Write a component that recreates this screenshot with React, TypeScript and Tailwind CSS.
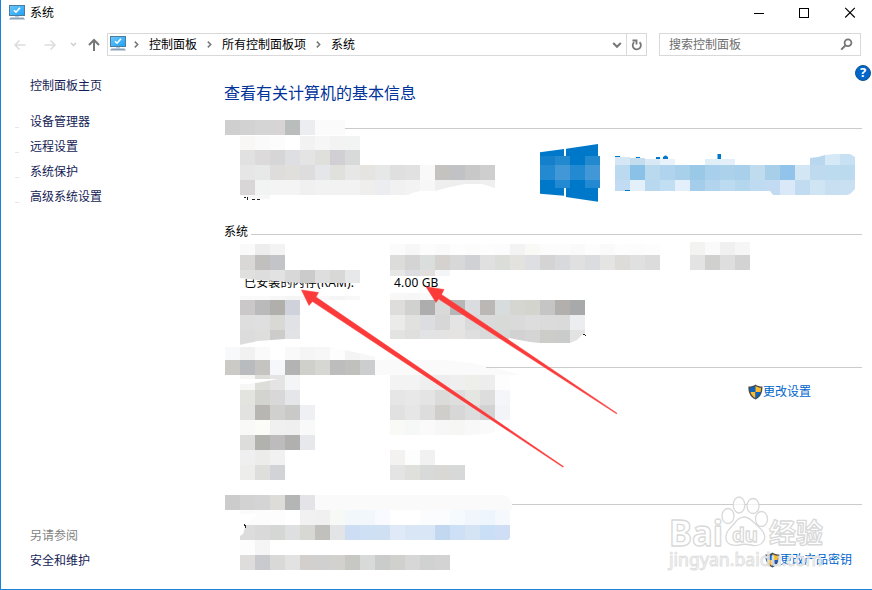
import React from "react";

type TileRow = [x: number, y: number, height: number, colors: string];

// Each colour is one 15px wide tile
const systemTiles: TileRow[] = [
  [225, 120, 15, "cfcfcf d2d2d2 d5d5d5 d7d4d6 b9bdbb ecedf1 fbfbfb fbfbfb"],
  [240, 136, 14, "f8f7f5 fafafa fcfcfc ffffff f2f2f2 f6f6f6 f3f3f3 f2f4f4"],
  [240, 150, 15, "e1e1e1 dcdadb d6d6d6 dddfe2 e4e4e4 dfdfdc d1cfd3 d8dad9"],
  [240, 165, 15, "e6e6e6 e6e9e7 dfdddb e1dfdb dddddd e4e6e9 e0e0dd e7e7e7 e6e4e1 e5e8e6 dfdfe0 e1e1e1 f9f9f9 c5c3c0 c0c2c5 c8c8c8 cecece"],
  [240, 180, 15, "d9d6d8 f2f4f3 f4f4f4 f4f4f4 f0f0f0 f2f2f2 f2f2f2 f2f2f2 f0eeec ecedf0 f1f1f1 f3f3f3 f7f7f7 efefef eeeeee eeeeee efefef"],
  [240, 244, 11, "fafafa ededed f3f3f3"],
  [240, 255, 15, "d9d8d6 c2c0be c2c4c7"],
  [240, 296, 4, "fafafa fafafa f7f7f7 f5f5f5 f7f7f7 f8f8f8 f5f5f5 f8f8f8"],
  [240, 300, 15, "cac8c8 bababb b0afac cfd2da"],
  [240, 315, 15, "dedede dfdfdf d8d8d5 e1e2e5"],
  [240, 330, 15, "dcdcdc dededc cdcccb e2e3e4"],
  [390, 244, 11, "fbfbfb f7f7f7 fcfcfc fafafa fdfdfd fcfcfc fdfdfd fcfcfc f3f3f3 f9f9f6 fcfcfc fcfcfc fafafa fdfdfd fafafa fdfdfd fcfcfc fdfdfd"],
  [390, 255, 15, "dcdcda d4d4d4 dadedc d4d1ce d8d8d8 d0d1d4 e0e0e0 dbddd9 e4e2df dedfe2 d4d4d4 d8d9dc e0e0e0 dbdce0 e4e4e2 dedcd9 e0e0e0 dcdcdc"],
  [390, 270, 6, "e7e7e5 dcdde1 e2dfde f4f5f7"],
  [390, 293, 7, "f8f8f8 f7f7f7 f9f9f9 fbfbfb"],
  [390, 300, 15, "dedddb d1d1cf adadad d9d9d9 b6b6b7 dadcdf bab7b4 d7dddc d5d5d2 d4d4cf c5c5c5 b2afac a8a9ab"],
  [390, 315, 15, "ebebe9 e1e1df dcdde1 d7d7d7 e4e4e4 dadada dadada d8dad7 dadada dddddd dbdbdb dadada ecedf0"],
  [390, 330, 9, "e3e3e1 dfdfdd e2e3e5 e3e3e3 e6e4e2 dfdfdf dadada d7d9d8"],
  [510, 330, 13, "d2d2d2 d5d5d5 ccccc8 c9ccca e3e3e3"],
  [690, 242, 13, "f3f3f1 fafafa f0f0f0 f6f6f6"],
  [690, 255, 15, "e3e3e3 d0d0ce dedede d3d3d3"],
  [225, 347, 13, "f8f9fa f1f1f1 fafafa ffffff f9f9f9 f5f5f5 f7f7f7 fdfdfd f4f4f4 f7f7f7"],
  [225, 360, 15, "cbcac6 b9bcbe c5c4c1 f5f7fa b3b3b3 cfcfcc d6d6d3 bdbdbd c0c0bd cccdce"],
  [240, 375, 15, "f7f7f5 ddddda e4e4e4 f4f5f7"],
  [240, 390, 15, "e3e3e0 d3d3d0 d8d8d8 e4e6ea"],
  [240, 405, 15, "e2e2e0 b7b6b3 d0d0cf c9c9c8 eef0f3"],
  [240, 420, 15, "f9f9f7 fbfbf8 f0f0f0 efefef f9f9f9"],
  [240, 435, 15, "dddddb b1b1ad bebbbc b0b0ae e7e8eb"],
  [240, 450, 15, "efefef ececea f1f1f1"],
  [240, 465, 15, "ededeb dededc d2d3d6"],
  [390, 375, 15, "f3f3f3 f3f3f3 efefef ededed efefef eeeeeb ededed fcfdfc"],
  [390, 390, 15, "e6e6e6 e8e8e8 e4e4e4 dbdbd9 dedede e5e5e2 dddddd f5f6f9"],
  [390, 405, 15, "e1e1e1 e6e6e6 dddddd d0cecb d7d7d7 dddddd d2d2d2 f3f4f7"],
  [390, 420, 15, "f9f9f6 f6f8f7 fafafa f7f7f7 f6f6f4 f8f8f8 fafafa"],
  [390, 450, 15, "f3f2f0 fcfdfc f1f1f1"],
  [390, 465, 15, "e4e4e4 dfdfdc d8dad9 dad8d5 d7d9d8"],
  [225, 495, 15, "cccccc d2d2d2 d4d4d4 dddcd9 b3b6b4 e3e3e8"],
  [240, 510, 15, "fbfbfb fbfcfb fdfdfd ffffff f1f1f1 f0f0f0 f7f9f7 f2f7fc f2f7fc f9faff ffffff ffffff fbfcfe fbfcfe f5fafe f1f6fc eef5fd f5f8fd"],
  [240, 525, 15, "dcdcdc d9d9d9 d5d7d4 dedfe1 d7d7d4 c1c0bd e3e4e5 cdddf4 cee0f4 cfe0f2 dfe9f8 d9e6f6 d9e6f6 c1d8f0 cee0f5 d5e4f4 c9dff5 cfdef5"],
  [240, 540, 15, "fdfdfd f5f5f5"],
  [240, 555, 15, "dfdddb c9cacd d9d9d7 e2e2e2 d2cfcc d0d0d0 d3d1ce c7c7c4 d8dad9 c9ccca d0d0cd d7d7d7 d0d2d1 d3d3d3"],
];

const ramTiles: TileRow[] = [
  [240, 270, 13, "e0e0df dddddd e2e2e2 d8d8d8 cbcbcb dedede d8d9d7 e7e8ea"],
];

const brandTiles: TileRow[] = [
  [540, 156, 9, "1480cb 2389cf 0078ca 2389cf"],
  [540, 165, 15, "2389d0 4298d6 2389d0 4298d6"],
  [540, 180, 8, "0078ca 2389d0 0078ca 2389d0"],
  [615, 157, 8, "d5e7f4"],
  [630, 158, 7, "c3ddef"],
  [645, 159, 6, "d8e9f5 e8f2fa"],
  [705, 159, 6, "e0eef8 e3f0f9"],
  [615, 165, 15, "bbdaf0 8ac1e6 b9d9ee b1d4ee a8d0ea 9ac8e7 a8cfec abd1eb a9d0eb bfdcef a8cfea 92c3ea d2e6f4"],
  [615, 180, 11, "c1dcf2 e3f0f9 b8d8ef c2def2 e3effa a4cceb b2d4ed bcdaf0 b5d7ee bfdbf1"],
];

const brandEndTiles: TileRow[] = [
  [810, 154, 11, "b9d8f0 d6e9f6 c7e1f3"],
  [810, 165, 15, "bddaee bddbee bcdaee"],
  [765, 180, 15, "c2dbf2 d9e9f7 c1dcf1 d0e5f4 c8dff2 c9dff2"],
];

const Tiles: React.FC<{ rows: TileRow[] }> = ({ rows }) => (
  <g shapeRendering="crispEdges">
    {rows.map(([x, y, height, colors]) =>
      colors.split(" ").map((color, i) => (
        <rect key={`${x}-${y}-${i}`} x={x + i * 15} y={y} width={15} height={height} fill={`#${color}`} />
      ))
    )}
  </g>
);

const ComputerIcon: React.FC = () => (
  <svg width="16" height="15" viewBox="0 0 16 15" className="shrink-0">
    <defs>
      <linearGradient id="screen" x1="0" y1="0" x2="1" y2="1">
        <stop offset="0" stopColor="#6cc8fb" />
        <stop offset="1" stopColor="#1ea0f5" />
      </linearGradient>
    </defs>
    <rect x="0.5" y="0.5" width="15" height="10" fill="url(#screen)" stroke="#4b7d9e" />
    <path d="M5 5.2l2 2 4-4.4" fill="none" stroke="#fff" strokeWidth="1.6" />
    <path d="M6 11h4v1.5H6z" fill="#c3d0dc" />
    <path d="M1.5 12.5h13l1.5 2H0z" fill="#8ba3b9" />
  </svg>
);

const ShieldIcon: React.FC = () => (
  <svg width="15" height="16" viewBox="0 0 15 16" className="shrink-0">
    <path d="M7.5 0.6C5.6 2 3.4 2.6 0.4 2.6 0.2 8.6 2.2 13.2 7.5 15.6 12.8 13.2 14.6 8.6 14.4 2.6 11.6 2.6 9.4 2 7.5 0.6z" fill="#454b50" />
    <path d="M7.5 2C5.8 3.1 4 3.7 2 3.8c0 1.5.1 2.9.5 4.2h5z" fill="#0b63c4" />
    <path d="M7.5 2c1.7 1.1 3.5 1.7 5.5 1.8 0 1.5-.1 2.9-.5 4.2h-5z" fill="#fdbb2f" />
    <path d="M2.5 8h5v6.2C4.9 12.8 3.2 10.7 2.5 8z" fill="#fdbb2f" />
    <path d="M12.5 8h-5v6.2c2.6-1.4 4.3-3.5 5-6.2z" fill="#0b63c4" />
  </svg>
);

const Chevron: React.FC = () => (
  <svg width="5" height="7" viewBox="0 0 5 7" className="shrink-0">
    <path d="M0.8 0.6L3.7 3.5 0.8 6.4" fill="none" stroke="#777" strokeWidth="1.5" />
  </svg>
);

const TitleBar: React.FC = () => (
  <header className="flex h-[25px] shrink-0 items-center pl-2">
    <ComputerIcon />
    <span className="ml-[5px] text-xs">系统</span>
    <svg width="102" height="12" viewBox="0 0 102 12" className="mr-[16px] ml-auto" fill="none" stroke="#000">
      <path d="M0 6.5h10" />
      <rect x="45.5" y="1.500" width="9" height="9" />
      <path d="M91.2 0.900l9.600 9.600M100.800 0.900l-9.600 9.600" strokeWidth="1.100" />
    </svg>
  </header>
);

const NavBar: React.FC = () => (
  <nav className="mt-2 flex h-[23px] shrink-0 text-xs">
    <svg width="106" height="23" viewBox="1 33 106 23" fill="none" className="shrink-0">
      <path d="M25.5 45H15M19.5 40.5L15 45l4.5 4.5" stroke="#ddd" strokeWidth="1.5" />
      <path d="M44.5 45H55M50.5 40.5L55 45l-4.5 4.5" stroke="#ddd" strokeWidth="1.5" />
      <path d="M71 43l2.5 2.5L76 43" stroke="#ccc" strokeWidth="1.3" />
      <path d="M94 51V40M89 45l5-5 5 5" stroke="#777" strokeWidth="2" />
    </svg>
    <div className="flex w-[540px] items-center border border-[#d9d9d9] pl-[2px]">
      <div className="-mt-[2px]"><ComputerIcon /></div>
      <div className="ml-2"><Chevron /></div>
      <span className="ml-[10px]">控制面板</span>
      <div className="ml-[10px]"><Chevron /></div>
      <span className="ml-[10px]">所有控制面板项</span>
      <div className="ml-[10px]"><Chevron /></div>
      <span className="ml-[10px]">系统</span>
      <svg width="10" height="8" viewBox="0 0 10 8" className="mr-[4px] ml-auto">
        <path d="M1.2 2L5 5.800l3.800-3.800" fill="none" stroke="#777" strokeWidth="2" />
      </svg>
      <div className="flex h-full w-5 items-center justify-center border-l border-[#d9d9d9]">
        <svg width="12" height="12" viewBox="0 0 12 12" fill="none" stroke="#777" strokeWidth="1.800">
          <path d="M8.500 3.200A4.100 4.100 0 1 1 3.200 3.100" />
          <path d="M1.500 1.500h4v4" />
        </svg>
      </div>
    </div>
    <div className="ml-3 flex w-[202px] items-center border border-[#d9d9d9] pr-[7px] pl-[9px] text-[#6d6d6d]">
      搜索控制面板
      <svg width="13" height="13" viewBox="0 0 13 13" className="ml-auto" fill="none" stroke="#777">
        <circle cx="8" cy="4.800" r="3.400" strokeWidth="1.800" />
        <path d="M5.600 7.200L1.200 11.600" strokeWidth="2" />
      </svg>
    </div>
  </nav>
);

const Sidebar: React.FC = () => (
  <aside className="flex w-[223px] shrink-0 flex-col pt-[17px] pb-4 pl-[29px] text-xs leading-[25px] text-[#151c55]">
    <a>控制面板主页</a>
    <ul className="mt-[11px]">
      <li>设备管理器</li>
      <li>远程设置</li>
      <li>系统保护</li>
      <li>高级系统设置</li>
    </ul>
    <p className="mt-auto text-[#838383]">另请参阅</p>
    <a>安全和维护</a>
  </aside>
);

const Divider: React.FC<{ label?: string; className?: string }> = ({ label, className }) => (
  <div className="flex h-[21px] items-center">
    {label && <span className="-mt-[5px] text-xs">{label}</span>}
    <div className={`h-px flex-1 bg-[#cbcbcb] ${className ?? ""}`} />
  </div>
);

const WindowsLogo: React.FC = () => (
  <svg width="60" height="59" viewBox="540 144 60 59" className="mt-[5px] ml-[316px]">
    <path d="M540 152.200L564 149v46.800L540 193.800zM566 148.700L598 144v57.700L566 197z" fill="#0078ca" />
    <path d="M563 156h4v32h-4z" fill="#0078ca" />
  </svg>
);

const SettingLink: React.FC<{ children: React.ReactNode }> = ({ children }) => (
  <a className="flex items-center text-xs text-[#0066cc]">
    <ShieldIcon />
    {children}
  </a>
);

const Watermark: React.FC = () => (
  <g fill="#fff" fillOpacity="0.7" stroke="#d9d9d9" strokeWidth="1.3" strokeLinejoin="round">
    <ellipse cx="739" cy="505" rx="5.8" ry="8" />
    <ellipse cx="753" cy="506" rx="6" ry="7.5" />
    <ellipse cx="728" cy="516" rx="6" ry="7.5" />
    <ellipse cx="761.5" cy="519" rx="6" ry="7.5" />
    <path d="M744.5 517c5 0 9 5 13 9 5 4 9 9 6.500 14-2.500 6-9 6-13 5-4-1-8-1-12 0-5 1-12 0-13-6-1-6 3-10 7-14 3-4 6-8 11.500-8z" />
    <g className="font-bold">
      <text x="669" y="546" fontSize="35" textLength="54" lengthAdjust="spacingAndGlyphs">Bai</text>
      <text x="732" y="542" fontSize="20" textLength="26" lengthAdjust="spacingAndGlyphs">du</text>
      <text x="769" y="543" fontSize="27" textLength="54" lengthAdjust="spacingAndGlyphs">经验</text>
    </g>
    <text x="669" y="566" fontSize="18" stroke="#e0e0e0" strokeWidth="1" textLength="153" lengthAdjust="spacingAndGlyphs">jingyan.baidu.com</text>
  </g>
);

// Mosaic, arrows and watermark drawn on top of the window
const Annotations: React.FC = () => (
  <svg
    width="872"
    height="590"
    viewBox="0 0 872 590"
    className="pointer-events-none absolute top-0 -left-px font-['Noto_Sans','Noto_Sans_CJK_SC',sans-serif]"
  >
    <defs>
      <clipPath id="ramEdge">
        <path d="M240 270H360V283H300L275 281 258 280 240 278z" />
      </clipPath>
      <clipPath id="brandEdge">
        <path d="M765 180H810V158L818 157 825 155 835 154H850L855 157V189L850 194 847 195H773L770 191H765z" />
      </clipPath>
    </defs>

    <path d="M375 360H445L470 363 486 366V368H495L522 375H375z" fill="#fafafa" />
    <path d="M315 495H503Q510 496 512 504V510H315z" fill="#fafafa" />
    <Tiles rows={systemTiles} />
    <g clipPath="url(#ramEdge)">
      <Tiles rows={ramTiles} />
    </g>
    <Tiles rows={brandTiles} />
    <g clipPath="url(#brandEdge)">
      <Tiles rows={brandEndTiles} />
    </g>

    {/* brushed off edges of the mosaic */}
    <g fill="#fff">
      <path d="M406 196L412 193 420 191H435L450 187 465 184H482L495 188V196z" />
      <path d="M239 346V345L258 341 285 339H301V346z" />
      <path d="M509 344V338L530 342 540 343H570L577 340 582 335 586 333V344z" />
      <path d="M239 379L278 379 262 382 250 384 239 384z" />
      <path d="M325 346H376V357L350 351z" />
      <path d="M240 514H258L246 525 243 534 240 536z" />
      <path d="M470 435L485 434 495 432V436z" />
      <path d="M507 541L511 537V541z" />
    </g>
    <path d="M240 195H270V199H255L245 197z" fill="#f7f7f7" />

    {/* bits of text left uncovered */}
    <g fill="#222" shapeRendering="crispEdges">
      <path d="M244 197h2v1h-2zM247 197h1v3h-1zM252 199h3v1h-3zM257 199h3v1h-3zM244 524h1v2h-1zM245 525h1v3h-1zM583 334h2v1h-2zM585 335h1v1h-1z" />
    </g>
    <g fill="#0078ca">
      <path d="M615 156h5v1h-5zM636 157h4v1h-4zM656 157h4v2h-4zM663 159v-2l2-1.5h1l2 1.5v2zM717.5 154h3.5v5h-3.5zM625 190h5v1h-5z" />
    </g>
    <g stroke="#e6e6e6">
      <path d="M15 127.5h4M15 152.5h4M15 177.5h4M15 202.5h4" />
    </g>

    <Watermark />

    <g fill="#fb3b3a" stroke="#fb3b3a" strokeWidth="0.500">
      <path d="M301.500 290L318.500 292.500 316 297 563.500 466.500 563 467.200 312.500 301.500 309 305.500z" />
      <path d="M426 286.700L444 289.500 441.500 294.500 617 413.200 616.500 413.800 438.500 299 436 302.500z" />
    </g>
  </svg>
);

const App: React.FC = () => {
  return (
    <div className="relative flex h-[590px] w-[872px] flex-col overflow-hidden border-b border-l border-[#1883d7] bg-white font-['Noto_Sans','Noto_Sans_CJK_SC',sans-serif] text-black">
      <TitleBar />
      <NavBar />

      <div className="flex flex-1">
        <Sidebar />

        <main className="flex flex-1 flex-col">
          <div className="flex h-[62px] justify-between pt-2 pr-px">
            <h1 className="mt-[17px] text-base leading-6 text-[#003399]">查看有关计算机的基本信息</h1>
            <div className="mt-px flex h-4 w-4 items-center justify-center rounded-full border border-[#15548c] bg-[#0066cc] text-[13px] font-bold text-white">
              ?
            </div>
          </div>

          <section className="h-[106px] pr-[10px]">
            <Divider className="ml-[120px]" />
            <WindowsLogo />
          </section>

          <section className="h-[133px] pr-[10px]">
            <Divider label="系统" className="ml-[3px]" />
            <dl className="mt-[29px] flex pl-5 text-xs leading-[18px] tracking-[0.15px]">
              <dt className="w-[150px]">已安装的内存(RAM):</dt>
              <dd>4.00 GB</dd>
            </dl>
          </section>

          <section className="h-[137px] pr-[10px]">
            <Divider className="ml-[262px]" />
            <div className="mt-[6px] flex justify-end pr-[51px]">
              <SettingLink>更改设置</SettingLink>
            </div>
          </section>

          <section className="flex-1 pr-[10px]">
            <Divider className="ml-[288px]" />
            <div className="mt-[37px] flex justify-end pr-[10px]">
              <SettingLink>更改产品密钥</SettingLink>
            </div>
          </section>
        </main>
      </div>

      <Annotations />
    </div>
  );
};

export default App;
